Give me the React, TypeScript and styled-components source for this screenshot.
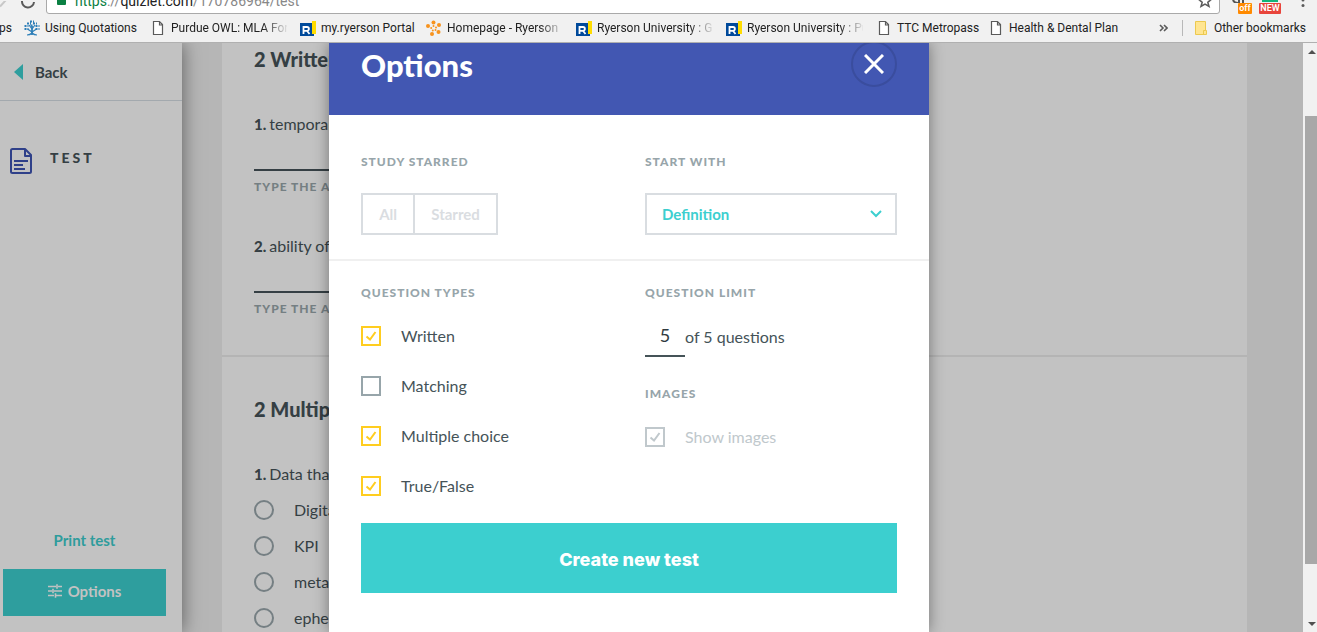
import React from "react";
import styled, { createGlobalStyle, css } from "styled-components";

const Global = createGlobalStyle`
  * { box-sizing: border-box; }
  body { margin: 0; background: #b6b6b6; font-family: Lato, "Open Sans", sans-serif; }
  button, input, select { font-family: inherit; margin: 0; }
  h1, h2, h3, p { margin: 0; }
`;

const Window = styled.div`
  display: flex;
  flex-direction: column;
  height: 100vh;
  overflow: hidden;
`;

/* ---- browser chrome ---- */

const Chrome = styled.header`
  flex: none;
  background: #f1f1f1;
  border-bottom: 1px solid #b0b0b0;
  font-family: Roboto, "Open Sans", sans-serif;
`;

const Toolbar = styled.div`
  display: flex;
  align-items: flex-end;
  height: 14px;
  overflow: hidden;
  padding-right: 12px;
`;

const NavIcons = styled.div`
  flex: none;
  width: 46px;
  height: 14px;
`;

const AddressBar = styled.div`
  flex: 1;
  display: flex;
  align-items: center;
  height: 28px;
  padding: 0 7px 0 10px;
  background: #fff;
  border: 1px solid #a9a9a9;
  border-radius: 3px;
`;

const Lock = styled.span`
  width: 9px;
  height: 10px;
  margin-right: 9px;
  background: #0b8043;
  border-radius: 1px;
`;

const Address = styled.span`
  flex: 1;
  padding-top: 2px;
  color: #888;
  font-size: 14px;
  line-height: 26px;
  b { font-weight: 400; color: #222; }
  i { font-style: normal; color: #0b8043; }
`;

const Extensions = styled.div`
  flex: none;
  display: flex;
  align-items: flex-end;
  height: 14px;
  padding-left: 12px;
`;

const Badge = styled.span<{ $color: string; $width: number }>`
  display: flex;
  align-items: center;
  justify-content: center;
  width: ${(p) => p.$width}px;
  height: 11px;
  border-radius: 1px;
  background: ${(p) => p.$color};
  color: #fff;
  font-size: 9px;
  font-weight: 600;
  line-height: 11px;
`;

const Extension = styled.span<{ $gap: number }>`
  display: flex;
  flex-direction: column;
  align-items: flex-end;
  margin-right: ${(p) => p.$gap}px;
  svg { display: block; }
`;

const Bookmarks = styled.nav`
  display: flex;
  align-items: center;
  height: 28px;
  font-size: 12px;
`;

const AppsLink = styled.a`
  display: flex;
  justify-content: flex-end;
  flex: none;
  width: 12px;
  margin-right: 12px;
  overflow: hidden;
  color: #222;
  text-decoration: none;
`;

const Bookmark = styled.a<{ $width: number }>`
  flex: none;
  display: flex;
  align-items: center;
  gap: 5px;
  width: ${(p) => p.$width}px;
  color: #222;
  text-decoration: none;
  white-space: nowrap;
  svg { flex: none; }
`;

const BookmarkText = styled.span<{ $fade?: boolean }>`
  line-height: 20px;
  ${(p) =>
    p.$fade &&
    css`
      width: 116px;
      overflow: hidden;
      mask-image: linear-gradient(to right, #000 92px, transparent 118px);
    `}
`;

const MoreButton = styled.button`
  margin-left: auto;
  padding: 0;
  border: 0;
  background: none;
  svg { display: block; }
`;

const OtherBookmarks = styled.a`
  display: flex;
  align-items: center;
  gap: 7px;
  flex: none;
  height: 16px;
  margin: 0 11px 0 14px;
  padding-left: 12px;
  border-left: 1px solid #b8b8b8;
  color: #222;
  text-decoration: none;
  white-space: nowrap;
`;

/* ---- page ---- */

const Viewport = styled.div`
  position: relative;
  flex: 1;
  min-height: 0;
  display: flex;
  overflow: hidden;
  background: #b6b6b6;
  color: #353f44;
`;

const Sidebar = styled.aside`
  position: relative;
  flex: none;
  display: flex;
  flex-direction: column;
  width: 182px;
  background: #c2c2c2;
  box-shadow: 0 0 18px rgba(0, 0, 0, 0.5);
`;

const BackLink = styled.a`
  display: flex;
  align-items: center;
  gap: 12px;
  height: 58px;
  padding: 1px 0 0 14px;
  border-bottom: 1px solid #a3a9ae;
  color: #353f44;
  font-size: 15px;
  font-weight: 700;
  text-decoration: none;
`;

const Mode = styled.h1`
  display: flex;
  align-items: flex-start;
  gap: 17px;
  margin-top: 46px;
  padding-left: 9px;
  font-size: 14px;
  line-height: 22px;
  font-weight: 900;
  letter-spacing: 3px;
  svg { display: block; }
`;

const SidebarActions = styled.div`
  display: flex;
  flex-direction: column;
  margin: auto 16px 16px 3px;
`;

const PrintLink = styled.a`
  align-self: center;
  margin-bottom: 19px;
  color: #2e9c9c;
  font-size: 15px;
  line-height: 20px;
  font-weight: 700;
  text-decoration: none;
`;

const OptionsButton = styled.button`
  display: flex;
  align-items: center;
  justify-content: center;
  gap: 6px;
  height: 47px;
  padding: 0 0 4px;
  border: 0;
  background: #2e9e9e;
  color: #c2c2c2;
  font-size: 15px;
  font-weight: 700;
`;

const Paper = styled.main`
  flex: 1;
  min-width: 0;
  margin: 0 56px 0 40px;
  background: #c2c2c2;
`;

const Section = styled.section<{ $top: number }>`
  padding: ${(p) => p.$top}px 32px 38px;
  border-bottom: 2px solid #b4b4b4;
`;

const SectionTitle = styled.h2`
  font-size: 20px;
  line-height: 24px;
  font-weight: 900;
`;

const Question = styled.div<{ $top: number }>`
  display: flex;
  flex-direction: column;
  max-width: 380px;
  margin-top: ${(p) => p.$top}px;
`;

const Prompt = styled.label`
  font-size: 16px;
  line-height: 24px;
  b { font-weight: 900; font-size: 15px; margin-right: 3px; }
`;

const AnswerInput = styled.input`
  height: 35px;
  padding: 0;
  border: 0;
  border-bottom: 2px solid #353f44;
  background: transparent;
  font-size: 16px;
`;

const Hint = styled.span`
  margin-top: 8px;
  color: #757f83;
  font-size: 12px;
  line-height: 16px;
  font-weight: 900;
  letter-spacing: 1px;
`;

const Choices = styled.div`
  margin-top: 6px;
`;

const Choice = styled.label`
  display: flex;
  align-items: center;
  gap: 20px;
  height: 36px;
  font-size: 16px;
  span { padding-bottom: 2px; }
`;

const Radio = styled.input`
  appearance: none;
  width: 20px;
  height: 20px;
  border: 2px solid #757f83;
  border-radius: 50%;
`;

const Scrollbar = styled.div`
  flex: none;
  display: flex;
  flex-direction: column;
  width: 14px;
  padding-left: 2px;
  background: #f1f1f1;
  svg { display: block; flex: none; }
`;

const Thumb = styled.div`
  flex: 448;
  margin-top: 56px;
  background: #a8a8a8;
`;

const TrackEnd = styled.div`
  flex: 51;
`;

/* ---- options dialog ---- */

const Overlay = styled.div`
  position: absolute;
  inset: 0 59px 0 0;
  display: flex;
  justify-content: center;
  pointer-events: none;
`;

const Dialog = styled.div`
  display: flex;
  flex-direction: column;
  width: 600px;
  max-width: 100%;
  background: #fff;
  box-shadow: 0 0 14px rgba(0, 0, 0, 0.4);
  pointer-events: auto;
`;

const DialogHeader = styled.div`
  display: flex;
  align-items: flex-end;
  justify-content: space-between;
  height: 72px;
  padding: 0 32px 28px;
  overflow: hidden;
  background: #4257b2;
  color: #fff;
`;

const DialogTitle = styled.h2`
  font-size: 31px;
  line-height: 44px;
  font-weight: 900;
`;

const CloseButton = styled.button`
  display: flex;
  align-items: center;
  justify-content: center;
  flex: none;
  width: 46px;
  height: 46px;
  padding: 0;
  border: 2px solid #3a4d9e;
  border-radius: 50%;
  background: none;
  color: #fff;
`;

const Columns = styled.div<{ $top: number; $ruled?: boolean }>`
  display: grid;
  grid-template-columns: 1fr 1fr;
  column-gap: 32px;
  padding: ${(p) => p.$top}px 32px ${(p) => (p.$ruled ? 24 : 0)}px;
  border-bottom: ${(p) => (p.$ruled ? "2px solid #f0f0f0" : "0")};
`;

const Group = styled.fieldset`
  min-width: 0;
  margin: 0;
  padding: 0;
  border: 0;
`;

const GroupTitle = styled.legend<{ $gap: number }>`
  display: block;
  margin-bottom: ${(p) => p.$gap}px;
  padding: 0;
  color: #97a5aa;
  font-size: 12px;
  line-height: 16px;
  font-weight: 900;
  letter-spacing: 1px;
`;

const Segments = styled.div`
  display: flex;
  width: 137px;
  height: 42px;
  border: 2px solid #d9dde1;
`;

const Segment = styled.button`
  flex: 1 0 auto;
  padding: 0 14px 1px;
  border: 0;
  background: #fff;
  color: #dadde1;
  font-size: 15px;
  font-weight: 700;
  & + & { border-left: 2px solid #d9dde1; }
`;

const SelectBox = styled.div`
  display: grid;
  align-items: center;
  & > * { grid-area: 1 / 1; }
  svg { justify-self: end; margin-right: 15px; pointer-events: none; }
`;

const Select = styled.select`
  appearance: none;
  width: 100%;
  height: 42px;
  padding: 0 15px 1px;
  border: 2px solid #d9dde1;
  border-radius: 0;
  background: #fff;
  color: #3ccfcf;
  font-size: 15px;
  font-weight: 700;
`;

const CheckRow = styled.label<{ $disabled?: boolean }>`
  display: flex;
  align-items: center;
  gap: 20px;
  height: 50px;
  color: ${(p) => (p.$disabled ? "#c0c8cc" : "#455358")};
  font-size: 16px;
`;

const CheckText = styled.span`
  padding-bottom: 2px;
`;

const CheckBoxWrap = styled.span`
  display: grid;
  flex: none;
  place-items: center;
  width: 20px;
  height: 20px;
  & > * { grid-area: 1 / 1; }
  svg { display: none; pointer-events: none; color: #ffcd1f; }
  input:checked + svg { display: block; }
  input:disabled + svg { color: #c0c8cc; }
`;

const CheckInput = styled.input`
  appearance: none;
  width: 20px;
  height: 20px;
  border: 2px solid #97a5aa;
  &:checked { border-color: #ffcd1f; }
  &:disabled { border-color: #c0c8cc; }
`;

const LimitRow = styled.label`
  display: flex;
  align-items: center;
  height: 46px;
  margin-bottom: 29px;
  color: #455358;
  font-size: 16px;
  span { padding-top: 4px; }
`;

const LimitInput = styled.input`
  width: 40px;
  height: 46px;
  padding: 4px 0 0;
  border: 0;
  border-bottom: 2px solid #455358;
  background: none;
  color: #303a3e;
  font-size: 18px;
  text-align: center;
`;

const CreateButton = styled.button`
  flex: none;
  height: 70px;
  margin: 12px 32px 0;
  padding: 2px 0 0;
  border: 0;
  background: #3ccfcf;
  color: #fff;
  font-family: Inter, Lato, sans-serif;
  font-size: 18px;
  font-weight: 800;
`;

/* ---- drawings ---- */

const PageIcon = () => (
  <svg width="16" height="16" viewBox="0 0 16 16" fill="#fff" stroke="#5a5a5a" strokeWidth="1.2">
    <path d="M3.5 1.5h6l3 3v10h-9zM9.5 1.5v3.5h3" />
  </svg>
);

const TreeIcon = () => (
  <svg width="16" height="16" viewBox="0 0 16 16" fill="none" stroke="#2e7fb8" strokeWidth="1.2">
    <path strokeWidth="1.8" d="M8 15V6" />
    <path d="M8 12 3.500 9M8 12l4.500-3M8 9 5 5M8 9l3-4M3 15q3 0 5-2 2 2 5 2" />
    <path strokeWidth="2.200" strokeDasharray="2 1" d="M.5 6h4M.5 9h4M11.500 6h4M11.500 9h4M3 3.500h4M9 3.500h4M6 1.500h4M6.500 5.500h3" />
  </svg>
);

const RyersonIcon = () => (
  <svg width="16" height="16" viewBox="0 0 16 16">
    <path fill="#004a9b" d="M0 3h14v13H0z" />
    <path fill="#ffdc00" d="M12 1h4v13h-4z" />
    <path fill="none" stroke="#fff" strokeWidth="1.800" d="M3.500 14v-7H7a1.800 1.800 0 0 1 0 3.800H3.500M7 10.800l2.500 3.200" />
  </svg>
);

const HubIcon = () => (
  <svg width="16" height="16" viewBox="0 0 16 16" fill="#f7931e">
    <circle cx="7.500" cy="2.500" r="2" /><circle cx="13" cy="5" r="2" />
    <circle cx="12.500" cy="12" r="2" /><circle cx="6" cy="14" r="2" />
    <circle cx="2" cy="6" r="2" />
    <circle cx="7.500" cy="6" r="1" /><circle cx="10" cy="7.500" r="1" />
    <circle cx="9.500" cy="10" r="1" /><circle cx="6.800" cy="10.500" r="1" /><circle cx="5.200" cy="8" r="1" />
  </svg>
);

const FolderIcon = () => (
  <svg width="12" height="14" viewBox="0 0 12 14" fill="#ffe591" stroke="#ecc94f">
    <path d="M.5.5h10v9h1v4H.5zM8.500 13.500v-4h2" />
  </svg>
);

const DocIcon = () => (
  <svg width="24" height="28" viewBox="0 0 24 28" fill="none" stroke="#2f4089" strokeWidth="2" strokeLinejoin="round">
    <path d="M2 3.500Q2 2 3.500 2H16l6 6v16.500q0 1.500-1.500 1.500h-17Q2 26 2 24.500zM16 2v7h6" />
    <path d="M5 14h14M5 18h9M5 22h11" />
  </svg>
);

const SlidersIcon = () => (
  <svg width="14" height="14" viewBox="0 0 14 14" fill="none" stroke="#c2c2c2" strokeWidth="1.600">
    <path d="M0 2.500h8M10 2.500h4M9 .3v4.400M0 7h4M6 7h8M5 4.800v4.400M0 11.500h6M8 11.500h6M7.500 9.300v4.400" />
  </svg>
);

const Tick = () => (
  <svg width="12" height="12" viewBox="0 0 12 12" fill="none" stroke="currentColor" strokeWidth="2">
    <path d="M1.500 6.500 5 9.500 10.500 2" />
  </svg>
);

const bookmarks = [
  { text: "Using Quotations", Icon: TreeIcon, width: 126 },
  { text: "Purdue OWL: MLA Form", Icon: PageIcon, width: 150, fade: true },
  { text: "my.ryerson Portal", Icon: RyersonIcon, width: 126 },
  { text: "Homepage - Ryerson", Icon: HubIcon, width: 150, fade: true },
  { text: "Ryerson University : G", Icon: RyersonIcon, width: 150, fade: true },
  { text: "Ryerson University : Pu", Icon: RyersonIcon, width: 150, fade: true },
  { text: "TTC Metropass", Icon: PageIcon, width: 112 },
  { text: "Health & Dental Plan", Icon: PageIcon, width: 140 },
];

const questionTypes = [
  { name: "Written", on: true },
  { name: "Matching", on: false },
  { name: "Multiple choice", on: true },
  { name: "True/False", on: true },
];

const CheckField = ({ name, on, disabled }: { name: string; on: boolean; disabled?: boolean }) => (
  <CheckRow $disabled={disabled}>
    <CheckBoxWrap>
      <CheckInput type="checkbox" defaultChecked={on} disabled={disabled} />
      <Tick />
    </CheckBoxWrap>
    <CheckText>{name}</CheckText>
  </CheckRow>
);

const BrowserChrome = () => (
  <Chrome>
    <Toolbar>
      <NavIcons>
        <svg width="46" height="14" viewBox="0 0 46 14" fill="none">
          <path d="M0 5.500 6-1" stroke="#c8c8c8" strokeWidth="2" />
          <path d="M22 0a6 6 0 0 0 12 1" stroke="#5a5a5a" strokeWidth="2" />
        </svg>
      </NavIcons>
      <AddressBar>
        <Lock />
        <Address><i>https</i>://<b>quizlet.com</b>/170786964/test</Address>
        <svg width="14" height="26" viewBox="0 0 14 26" fill="none" stroke="#5a5a5a" strokeWidth="1.500">
          <path d="m7 8 1.800 4.200 4.400.3-3.400 2.800 1.200 4.200L7 17.200l-4 2.300 1.200-4.200-3.400-2.800 4.400-.3z" />
        </svg>
      </AddressBar>
      <Extensions>
        <Extension $gap={7}>
          <svg width="20" height="3" viewBox="0 0 20 3" fill="none" stroke="#555" strokeWidth="2"><path d="M1 0q1 3 5 3M7 0v3M11 0v3" /></svg>
          <Badge $color="#ff8a00" $width={14}>off</Badge>
        </Extension>
        <Extension $gap={20}>
          <svg width="22" height="3" viewBox="0 0 22 3"><path fill="#12b37a" d="M3 0h16v2H3z" /></svg>
          <Badge $color="#e8453c" $width={22}>NEW</Badge>
        </Extension>
        <svg width="4" height="14" viewBox="0 0 4 14" fill="#5a5a5a"><circle cx="2" cy="0" r="1.500" /><circle cx="2" cy="5.500" r="1.500" /></svg>
      </Extensions>
    </Toolbar>
    <Bookmarks>
      <AppsLink href="#">Apps</AppsLink>
      {bookmarks.map(({ text, Icon, width, fade }) => (
        <Bookmark key={text} href="#" $width={width}>
          <Icon />
          <BookmarkText $fade={fade}>{text}</BookmarkText>
        </Bookmark>
      ))}
      <MoreButton aria-label="More bookmarks">
        <svg width="9" height="8" viewBox="0 0 9 8" fill="none" stroke="#5a5a5a" strokeWidth="1.600">
          <path d="m1 1 3 3-3 3M5 1l3 3-3 3" />
        </svg>
      </MoreButton>
      <OtherBookmarks href="#"><FolderIcon />Other bookmarks</OtherBookmarks>
    </Bookmarks>
  </Chrome>
);

const OptionsDialog = () => (
  <Overlay>
    <Dialog role="dialog" aria-label="Options">
      <DialogHeader>
        <DialogTitle>Options</DialogTitle>
        <CloseButton aria-label="Close">
          <svg width="20" height="20" viewBox="0 0 20 20" fill="none" stroke="currentColor" strokeWidth="3">
            <path d="m1 1 18 18M19 1 1 19" />
          </svg>
        </CloseButton>
      </DialogHeader>
      <Columns $top={39} $ruled>
        <Group>
          <GroupTitle $gap={23}>STUDY STARRED</GroupTitle>
          <Segments>
            <Segment disabled>All</Segment>
            <Segment disabled>Starred</Segment>
          </Segments>
        </Group>
        <Group>
          <GroupTitle $gap={23}>START WITH</GroupTitle>
          <SelectBox>
            <Select aria-label="Start with" defaultValue="Definition">
              <option>Definition</option>
              <option>Term</option>
            </Select>
            <svg width="12" height="8" viewBox="0 0 12 8" fill="none" stroke="#3ccfcf" strokeWidth="2">
              <path d="m1 1 5 5 5-5" />
            </svg>
          </SelectBox>
        </Group>
      </Columns>
      <Columns $top={24}>
        <Group>
          <GroupTitle $gap={10}>QUESTION TYPES</GroupTitle>
          {questionTypes.map((t) => <CheckField key={t.name} {...t} />)}
        </Group>
        <div>
          <Group>
            <GroupTitle $gap={10}>QUESTION LIMIT</GroupTitle>
            <LimitRow>
              <LimitInput defaultValue="5" />
              <span>of 5 questions</span>
            </LimitRow>
          </Group>
          <Group>
            <GroupTitle $gap={10}>IMAGES</GroupTitle>
            <CheckField name="Show images" on disabled />
          </Group>
        </div>
      </Columns>
      <CreateButton>Create new test</CreateButton>
    </Dialog>
  </Overlay>
);

export default function App() {
  return (
    <Window>
      <Global />
      <BrowserChrome />
      <Viewport>
        <Sidebar>
          <BackLink href="#">
            <svg width="9" height="16" viewBox="0 0 9 16" fill="#2e9e9e"><path d="M9 0v16L0 8z" /></svg>
            Back
          </BackLink>
          <Mode><DocIcon />TEST</Mode>
          <SidebarActions>
            <PrintLink href="#">Print test</PrintLink>
            <OptionsButton><SlidersIcon />Options</OptionsButton>
          </SidebarActions>
        </Sidebar>
        <Paper>
          <Section $top={4}>
            <SectionTitle>2 Written questions</SectionTitle>
            <Question $top={41}>
              <Prompt htmlFor="a1"><b>1.</b>temporary</Prompt>
              <AnswerInput id="a1" />
              <Hint>TYPE THE ANSWER</Hint>
            </Question>
            <Question $top={39}>
              <Prompt htmlFor="a2"><b>2.</b>ability of</Prompt>
              <AnswerInput id="a2" />
              <Hint>TYPE THE ANSWER</Hint>
            </Question>
          </Section>
          <Section $top={40}>
            <SectionTitle>2 Multiple choice questions</SectionTitle>
            <Question $top={41}>
              <Prompt as="p"><b>1.</b>Data that</Prompt>
              <Choices>
                {["Digital", "KPI", "metadata", "ephemeral"].map((c) => (
                  <Choice key={c}><Radio type="radio" name="mc1" /><span>{c}</span></Choice>
                ))}
              </Choices>
            </Question>
          </Section>
        </Paper>
        <Scrollbar>
          <svg width="12" height="17" viewBox="0 0 12 17" fill="#505050"><path d="M3 11h8L7 7z" /></svg>
          <Thumb />
          <TrackEnd />
          <svg width="12" height="17" viewBox="0 0 12 17" fill="#505050"><path d="M3 7h8l-4 4z" /></svg>
        </Scrollbar>
        <OptionsDialog />
      </Viewport>
    </Window>
  );
}
